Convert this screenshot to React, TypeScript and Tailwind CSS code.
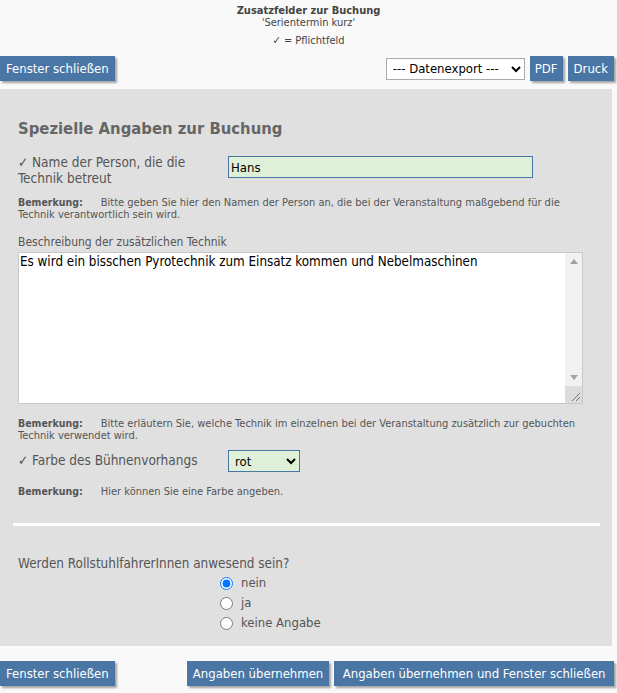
import React from 'react'

const font = { fontFamily: '"DejaVu Sans Condensed", "DejaVu Sans", sans-serif' }

function BlueButton({ children, className = '' }: { children: React.ReactNode; className?: string }) {
  return (
    <button
      className={`h-[25px] bg-[#4a76a6] text-white text-[13px] leading-none shadow-[2px_2px_2px_rgba(0,0,0,0.35)] ${className || 'px-[6px]'}`}
    >
      {children}
    </button>
  )
}

function Note({ children }: { children: React.ReactNode }) {
  return (
    <p className="w-[565px] text-[11px] leading-[12px] text-[#555]">
      <span className="font-bold text-[10.5px] mr-[18px]">Bemerkung:</span>
      {children}
    </p>
  )
}

function FakeScrollbar() {
  return (
    <div className="w-[17px] flex flex-col bg-[#f1f1f1]">
      <div className="h-[17px] flex items-center justify-center">
        <svg width="8" height="5" viewBox="0 0 8 5"><path d="M4 0L8 5H0Z" fill="#a3a3a3" /></svg>
      </div>
      <div className="flex-1" />
      <div className="h-[17px] flex items-center justify-center">
        <svg width="8" height="5" viewBox="0 0 8 5"><path d="M0 0H8L4 5Z" fill="#a3a3a3" /></svg>
      </div>
      <div className="h-[17px] bg-[#dcdcdc] flex items-end justify-end p-[2px]">
        <svg width="9" height="9" viewBox="0 0 9 9">
          <path d="M1 9L9 1M5 9L9 5" stroke="#777" strokeWidth="1" />
        </svg>
      </div>
    </div>
  )
}

export default function App() {
  return (
    <div className="w-[617px] h-[693px] bg-[#f9f9f9] text-[#555] overflow-hidden" style={font}>
      {/* Kopf */}
      <div className="pt-[5px] text-center text-[11px] leading-[12px] text-[#444]">
        <p className="font-bold">Zusatzfelder zur Buchung</p>
        <p>'Serientermin kurz'</p>
        <p className="mt-[6px]">✓ = Pflichtfeld</p>
      </div>

      {/* Obere Buttonleiste */}
      <div className="mt-[9px] flex items-center justify-between pr-[3px]">
        <BlueButton>Fenster schließen</BlueButton>
        <div className="flex items-center gap-[5px]">
          <select className="h-[22px] w-[139px] bg-white border border-[#aaa] text-[13px] text-black px-[2px]">
            <option>--- Datenexport ---</option>
          </select>
          <BlueButton className="px-[5px]">PDF</BlueButton>
          <BlueButton>Druck</BlueButton>
        </div>
      </div>

      {/* Formular */}
      <div className="mt-[8px] mr-[5px] h-[557px] bg-[#e0e0e0] px-[18px] pt-[30px]">
        <h2 className="text-[16.5px] font-bold text-[#666] leading-[20px]">Spezielle Angaben zur Buchung</h2>

        <div className="mt-[17px] flex">
          <label className="w-[210px] mt-[-2px] text-[13.5px] leading-[16px]">✓ Name der Person, die die Technik betreut</label>
          <input
            defaultValue="Hans"
            className="h-[22px] w-[305px] bg-[#dff0d8] border border-[#4a76a6] px-[2px] text-[13px] text-black outline-none"
          />
        </div>
        <div className="mt-[10px]">
          <Note>Bitte geben Sie hier den Namen der Person an, die bei der Veranstaltung maßgebend für die Technik verantwortlich sein wird.</Note>
        </div>

        <p className="mt-[13px] text-[12px] leading-[16px]">Beschreibung der zusätzlichen Technik</p>
        <div className="mt-[2px] flex w-[565px] h-[152px] bg-white border border-[#c8c8c8]">
          <textarea
            defaultValue="Es wird ein bisschen Pyrotechnik zum Einsatz kommen und Nebelmaschinen"
            className="flex-1 resize-none bg-white text-[13.3px] leading-[16px] text-black px-[1px] py-[1px] outline-none"
          />
          <FakeScrollbar />
        </div>
        <div className="mt-[13px]">
          <Note>Bitte erläutern Sie, welche Technik im einzelnen bei der Veranstaltung zusätzlich zur gebuchten Technik verwendet wird.</Note>
        </div>

        <div className="mt-[8px] flex">
          <label className="w-[210px] text-[13.5px] leading-[16px] pt-[2px]">✓ Farbe des Bühnenvorhangs</label>
          <select className="h-[22px] w-[72px] bg-[#dff0d8] border border-[#4a76a6] text-[13px] text-black px-[2px] outline-none">
            <option>rot</option>
          </select>
        </div>
        <div className="mt-[13px]">
          <Note>Hier können Sie eine Farbe angeben.</Note>
        </div>

        <div className="mt-[25px] ml-[-5px] mr-[-6px] h-[3px] bg-white" />

        <p className="mt-[30px] text-[13.4px] leading-[16px]">Werden RollstuhlfahrerInnen anwesend sein?</p>
        <div className="ml-[202px] mt-[1px] flex flex-col text-[13px]">
          {['nein', 'ja', 'keine Angabe'].map((v, i) => (
            <label key={v} className="flex items-center h-[20px] gap-[8px]">
              <input type="radio" name="rolli" defaultChecked={i === 0} className="m-0 w-[13px] h-[13px]" />
              {v}
            </label>
          ))}
        </div>
      </div>

      {/* Untere Buttonleiste */}
      <div className="mt-[15px] flex items-center pr-[3px]">
        <BlueButton>Fenster schließen</BlueButton>
        <div className="ml-auto flex gap-[5px]">
          <BlueButton>Angaben übernehmen</BlueButton>
          <BlueButton className="px-[8.5px]">Angaben übernehmen und Fenster schließen</BlueButton>
        </div>
      </div>
    </div>
  )
}
